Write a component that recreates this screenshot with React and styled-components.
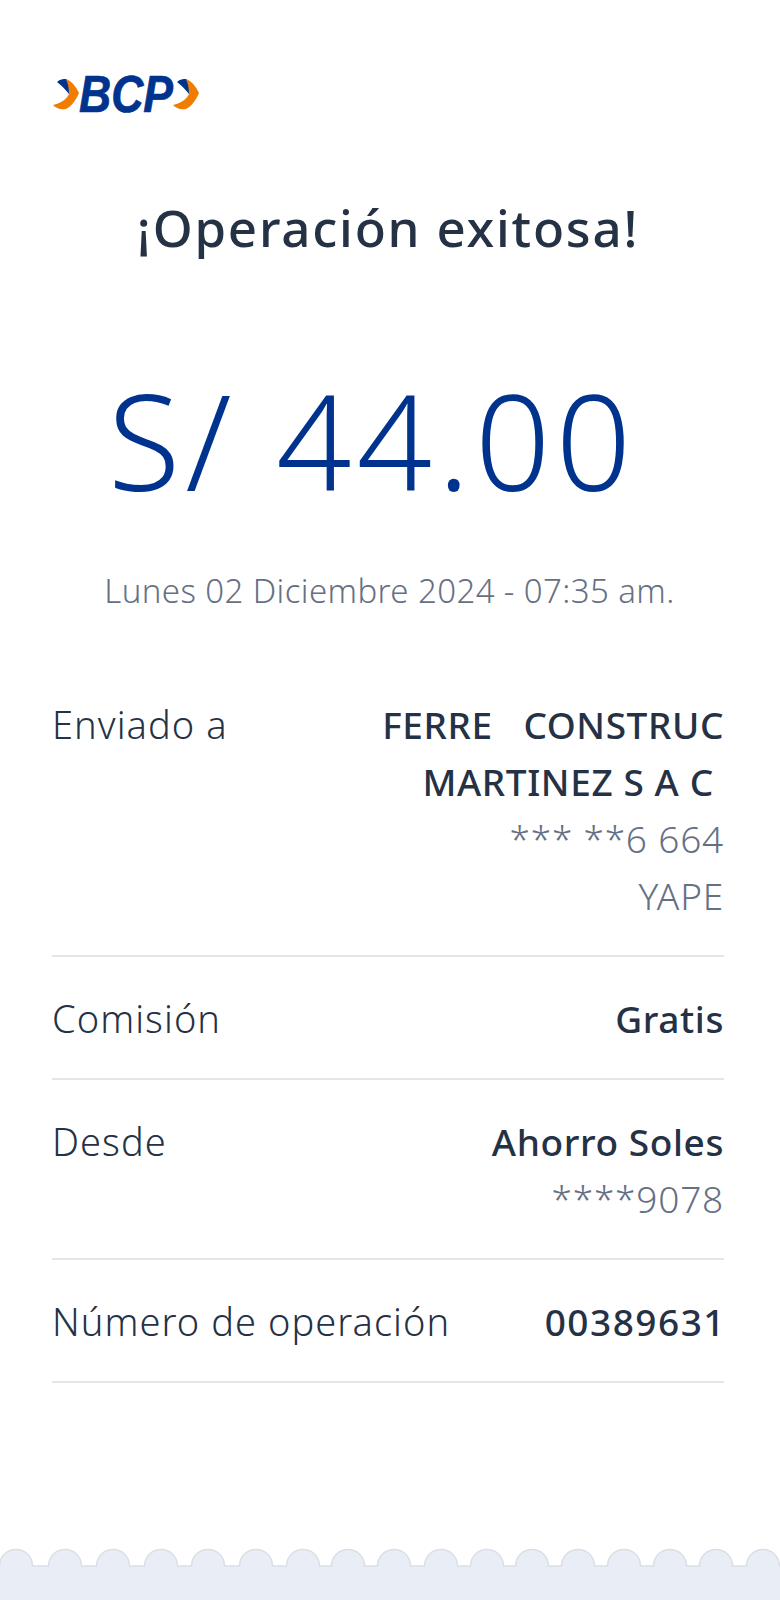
import React from "react";
import styled, { createGlobalStyle } from "styled-components";

const Global = createGlobalStyle`
  html, body { margin: 0; padding: 0; background: #fff; }
  body { font-family: "Noto Sans", "Open Sans", sans-serif; }
`;

const Page = styled.div`
  width: 780px;
  height: 1600px;
  display: flex;
  flex-direction: column;
  background: #fff;
  overflow: hidden;
`;

const Content = styled.main`
  flex: 1;
  display: flex;
  flex-direction: column;
  padding: 67px 56px 0 52px;
`;

const LogoMark = styled.svg`
  display: block;
  width: 150px;
  height: 56px;
`;

const Title = styled.h1`
  margin: 70px 0 0;
  text-align: center;
  font-size: 51px;
  line-height: 68px;
  font-weight: 500;
  color: #253145;
  letter-spacing: 1.8px;
`;

const Amount = styled.div`
  margin-top: 104px;
  padding-left: 8px;
  text-align: center;
  font-size: 132px;
  line-height: 150px;
  font-weight: 300;
  color: #00338d;
  letter-spacing: 5.3px;
  white-space: pre;
`;

const DateLine = styled.div`
  margin-top: 54px;
  padding-left: 3px;
  text-align: center;
  font-size: 33px;
  line-height: 44px;
  font-weight: 300;
  color: #667085;
  letter-spacing: 0.4px;
`;

const Details = styled.section`
  margin-top: 50px;
  display: flex;
  flex-direction: column;
`;

const Row = styled.div`
  display: flex;
  justify-content: space-between;
  align-items: flex-start;
  padding: 33px 0 31px;
  border-bottom: 2px solid #e3e5e8;
`;

const Label = styled.div`
  font-size: 38px;
  line-height: 57px;
  font-weight: 300;
  color: #253145;
  letter-spacing: 1.05px;
  white-space: pre;
`;

const Values = styled.div`
  display: flex;
  flex-direction: column;
  align-items: flex-end;
`;

const Strong = styled.div`
  font-size: 37px;
  line-height: 57px;
  font-weight: 500;
  color: #253145;
  letter-spacing: ${(p) => p.$spacing || "0.6px"};
  margin-right: ${(p) => (p.$spacing ? "-2px" : "0")};
  white-space: pre;
`;

const Muted = styled.div`
  font-size: 37px;
  line-height: 57px;
  font-weight: 300;
  color: #667085;
  letter-spacing: 0.8px;
  white-space: pre;
`;

const Ticket = styled.svg`
  display: block;
  width: 780px;
  height: 52px;
  flex: none;
`;

const centers = [16, 65, 113, 161, 208, 256, 303, 348, 394, 441, 487, 532, 578, 624, 670, 716, 763];

const edge = () => {
  let d = "M-2 60V18";
  centers.forEach((c) => {
    d += `H${c - 16.5}A16.5 16.5 0 0 1 ${c + 16.5} 18`;
  });
  return d + "H782V60Z";
};

const Chevron = ({ x }) => (
  <g transform={`translate(${x} 8)`}>
    <path d="M1 30C9 28 15 24 17 19L14 4C20 6 24 12 27 18C24 25 20 31 14 34C8 35 4 33 1 30Z" fill="#f07c00" />
    <path d="M5 7C8 4 11 4 14 4C16 8 17 14 17 19C13 14 9 10 5 7Z" fill="#00338d" />
  </g>
);

const Logo = () => (
  <LogoMark viewBox="0 0 150 56" aria-label="BCP">
    <Chevron x={0} />
    <text x="27" y="45" fontFamily="Liberation Sans, sans-serif" fontStyle="italic" fontWeight="700" fontSize="51" fill="#00338d" stroke="#00338d" strokeWidth="0.7" textLength="94" lengthAdjust="spacingAndGlyphs">BCP</text>
    <Chevron x={120} />
  </LogoMark>
);

export default function App() {
  return (
    <Page>
      <Global />
      <Content>
        <Logo />
        <Title>¡Operación exitosa!</Title>
        <Amount>{"S/ 44.00 "}</Amount>
        <DateLine>Lunes 02 Diciembre 2024 - 07:35 am.</DateLine>
        <Details>
          <Row>
            <Label>Enviado a</Label>
            <Values>
              <Strong>FERRE   CONSTRUC</Strong>
              <Strong>MARTINEZ S A C </Strong>
              <Muted>*** **6 664</Muted>
              <Muted>YAPE</Muted>
            </Values>
          </Row>
          <Row>
            <Label>Comisión</Label>
            <Strong>Gratis</Strong>
          </Row>
          <Row>
            <Label>Desde</Label>
            <Values>
              <Strong>Ahorro Soles</Strong>
              <Muted>****9078</Muted>
            </Values>
          </Row>
          <Row>
            <Label>Número de operación</Label>
            <Strong $spacing="1.5px">00389631</Strong>
          </Row>
        </Details>
      </Content>
      <Ticket viewBox="0 0 780 52">
        <path d={edge()} fill="#e9edf5" stroke="#dadee7" strokeWidth="1.5" />
      </Ticket>
    </Page>
  );
}
